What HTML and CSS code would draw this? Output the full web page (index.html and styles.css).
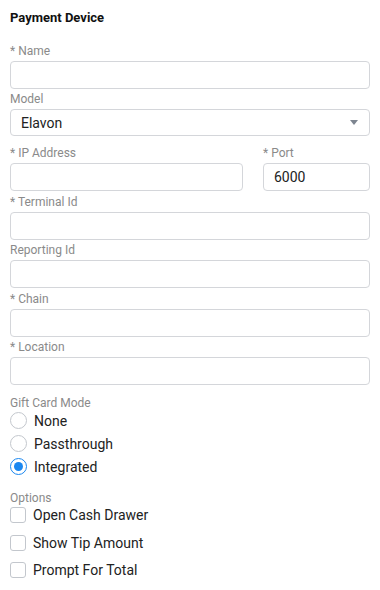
FILE: index.html
```html
<!DOCTYPE html>
<html>
<head>
<meta charset="utf-8">
<link rel="stylesheet" href="styles.css">
</head>
<body>
<div class="form">
  <div class="title">Payment Device</div>

  <div class="field">
    <div class="label">* Name</div>
    <input class="input" type="text">
  </div>

  <div class="field">
    <div class="label">Model</div>
    <div class="select">
      <span class="select-value">Elavon</span>
      <span class="caret"></span>
    </div>
  </div>

  <div class="row spaced">
    <div class="field col-wide">
      <div class="label">* IP Address</div>
      <input class="input" type="text">
    </div>
    <div class="field col-narrow">
      <div class="label">* Port</div>
      <input class="input" type="text" value="6000">
    </div>
  </div>

  <div class="field spaced">
    <div class="label">* Terminal Id</div>
    <input class="input" type="text">
  </div>

  <div class="field spaced">
    <div class="label">Reporting Id</div>
    <input class="input" type="text">
  </div>

  <div class="field spaced">
    <div class="label">* Chain</div>
    <input class="input" type="text">
  </div>

  <div class="field">
    <div class="label">* Location</div>
    <input class="input" type="text">
  </div>

  <div class="group radios">
    <div class="group-label">Gift Card Mode</div>
    <label class="choice"><input class="radio" type="radio" name="gc"><span>None</span></label>
    <label class="choice"><input class="radio" type="radio" name="gc"><span>Passthrough</span></label>
    <label class="choice"><input class="radio" type="radio" name="gc" checked><span>Integrated</span></label>
  </div>

  <div class="group checks">
    <div class="group-label">Options</div>
    <label class="choice"><input class="check" type="checkbox"><span>Open Cash Drawer</span></label>
    <label class="choice"><input class="check" type="checkbox"><span>Show Tip Amount</span></label>
    <label class="choice"><input class="check" type="checkbox"><span>Prompt For Total</span></label>
  </div>
</div>
</body>
</html>
```

FILE: styles.css
```css
* { box-sizing: border-box; }

body {
  margin: 0;
  background: #fff;
  font-family: Roboto, "Liberation Sans", Arial, sans-serif;
  color: #222;
}

.form {
  padding: 10px 10px 0 10px;
  display: flex;
  flex-direction: column;
}

.title {
  font-size: 13px;
  font-weight: 700;
  line-height: 16px;
  color: #111;
  margin-bottom: 15px;
}

.field {
  display: flex;
  flex-direction: column;
}

.spaced {
  margin-bottom: 0.6px;
}

.label {
  font-size: 12px;
  line-height: 20px;
  height: 20px;
  color: #8a8a8a;
}

.input {
  height: 28px;
  width: 100%;
  border: 1px solid #d4d6da;
  border-radius: 4px;
  padding: 0 10px;
  font-family: inherit;
  font-size: 14px;
  color: #222;
  outline: none;
  margin: 0;
  background: #fff;
}

.select {
  height: 27px;
  border: 1px solid #d4d6da;
  border-radius: 4px;
  padding: 0 10px;
  display: flex;
  align-items: center;
  justify-content: space-between;
  font-size: 14px;
  color: #222;
  margin-bottom: 7px;
}

.caret {
  width: 0;
  height: 0;
  border-left: 4.5px solid transparent;
  border-right: 4.5px solid transparent;
  border-top: 5px solid #7d8590;
  margin-right: 1px;
}

.row {
  display: grid;
  grid-template-columns: 233px 1fr;
  column-gap: 20px;
}

.group {
  display: flex;
  flex-direction: column;
}

.group-label {
  font-size: 12px;
  color: #8a8a8a;
}

.radios {
  margin-top: 6px;
}

.radios .group-label {
  height: 18px;
  padding-top: 6px;
  line-height: 12px;
}

.radios .choice {
  height: 23px;
}

.checks {
  margin-top: 9px;
  gap: 7.5px;
}

.checks .group-label {
  margin-bottom: -7.5px;
  height: 18px;
  padding-top: 4px;
  line-height: 14px;
}

.checks .choice {
  height: 20px;
}

.choice {
  display: flex;
  align-items: center;
  gap: 7px;
  font-size: 14px;
  color: #222;
}

.radio {
  -webkit-appearance: none;
  appearance: none;
  margin: 0;
  width: 17px;
  height: 17px;
  border-radius: 50%;
  border: 1.5px solid #c3c7cd;
  background: #fff;
  position: relative;
  flex: none;
}

.radio:checked {
  border-color: #1a87f0;
  border-width: 1.5px;
}

.radio:checked::after {
  content: "";
  position: absolute;
  left: 2.5px;
  top: 2.5px;
  width: 9px;
  height: 9px;
  border-radius: 50%;
  background: #1a87f0;
}

.check {
  -webkit-appearance: none;
  appearance: none;
  margin: 0;
  width: 16px;
  height: 16px;
  border: 1.5px solid #c3c7cd;
  border-radius: 3px;
  background: #fff;
  flex: none;
}
```
